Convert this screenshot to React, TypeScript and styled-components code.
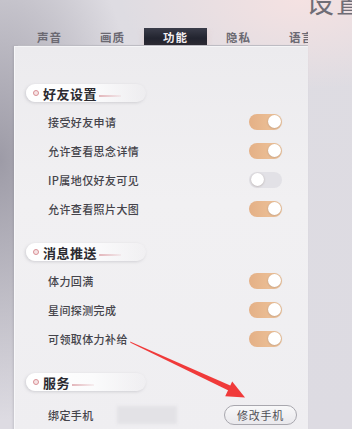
import React from "react";
import styled, { createGlobalStyle } from "styled-components";

const Global = createGlobalStyle`
  html, body { margin: 0; padding: 0; }
  body { font-family: "Noto Sans CJK SC", "Noto Sans", sans-serif; }
`;

const Screen = styled.div`
  position: relative;
  width: 352px;
  height: 429px;
  overflow: hidden;
  background:
    radial-gradient(ellipse 180px 90px at 300px 0px, rgba(246, 226, 226, 0.95), rgba(246, 226, 226, 0) 100%),
    radial-gradient(ellipse 140px 260px at 0px 160px, rgba(150, 148, 160, 0.9), rgba(160, 158, 168, 0) 100%),
    linear-gradient(180deg, #dedce2 0%, #dddbe2 100%);
  display: flex;
  flex-direction: column;
`;

const Header = styled.div`
  flex: 0 0 28px;
  height: 28px;
  display: flex;
  justify-content: flex-end;
  overflow: hidden;
`;

const Title = styled.div`
  font-size: 28px;
  line-height: 28px;
  margin-top: -13px;
  margin-right: -14px;
  color: #6f6d76;
  letter-spacing: 2px;
  font-weight: 400;
`;

const TabBar = styled.div`
  flex: 0 0 auto;
  display: flex;
  height: 17px;
  margin-left: 18px;
  width: 290px;
  overflow: hidden;
  border-bottom: 1px solid #c4c3c9;
`;

const Tab = styled.div<{ $active?: boolean }>`
  flex: 0 0 63px;
  display: flex;
  align-items: center;
  justify-content: center;
  font-size: 11.5px;
  font-weight: 700;
  letter-spacing: 1px;
  color: ${(p) => (p.$active ? "#f3eef0" : "#6b6972")};
  background: ${(p) =>
    p.$active
      ? "linear-gradient(180deg, #3b3d4a 0%, #22242f 60%, #2c2a33 100%)"
      : "transparent"};
  box-shadow: ${(p) => (p.$active ? "0 3px 6px rgba(230, 180, 170, 0.35)" : "none")};
`;

const Panel = styled.div`
  margin-left: 14px;
  width: 294px;
  flex: 1 0 auto;
  background: linear-gradient(180deg, #ecebee 0%, #f1f0f2 40%, #efeef1 100%);
  border-left: 1px solid #f7f7f9;
  border-top: 1px solid #f5f5f7;
  box-shadow: -1px 0 2px rgba(120, 118, 128, 0.25);
  padding: 37px 11px 0 11px;
  box-sizing: border-box;
  display: flex;
  flex-direction: column;
`;

const Section = styled.div<{ $first?: boolean }>`
  display: flex;
  flex-direction: column;
  flex-shrink: 0;
  margin-top: ${(p) => (p.$first ? 0 : 20)}px;
`;

const SectionHead = styled.div`
  flex-shrink: 0;
  height: 18px;
  width: 120px;
  border-radius: 9px;
  background: linear-gradient(90deg, #ffffff 0%, #fbfbfc 55%, rgba(245, 244, 246, 0) 100%);
  box-shadow: -1px 1px 3px rgba(150, 148, 158, 0.35);
  display: flex;
  align-items: center;
  padding-left: 7px;
  margin-bottom: 5px;
  box-sizing: border-box;
`;

const Dot = styled.span`
  width: 4px;
  height: 4px;
  border-radius: 50%;
  border: 1.2px solid #d98f95;
  background: #f6e3e4;
  margin-right: 4px;
`;

const HeadText = styled.span`
  font-size: 13px;
  font-weight: 700;
  color: #2c2b31;
  letter-spacing: 0.5px;
`;

const HeadLine = styled.span`
  width: 22px;
  height: 1.5px;
  margin-left: 2px;
  margin-top: 6px;
  background: linear-gradient(90deg, #e3b6bb, rgba(230, 190, 195, 0.2));
`;

const Row = styled.div<{ $tall?: boolean }>`
  flex-shrink: 0;
  height: ${(p) => (p.$tall ? 38 : 29)}px;
  display: flex;
  align-items: center;
  padding-left: 22px;
`;

const Label = styled.span<{ $fixed?: boolean }>`
  font-size: 11px;
  color: #45444b;
  font-weight: 500;
  letter-spacing: 0.4px;
  flex: ${(p) => (p.$fixed ? "0 0 auto" : "1")};
`;

const Switch = styled.div<{ $on: boolean }>`
  width: 33px;
  height: 16px;
  border-radius: 8px;
  margin-right: 15px;
  box-sizing: border-box;
  padding: 1.5px;
  display: flex;
  justify-content: ${(p) => (p.$on ? "flex-end" : "flex-start")};
  background: ${(p) =>
    p.$on ? "linear-gradient(90deg, #e4b086 0%, #efc59c 100%)" : "#e2e1e6"};
`;

const Knob = styled.div`
  width: 13px;
  height: 13px;
  border-radius: 50%;
  background: #ffffff;
  box-shadow: 0 0.5px 2px rgba(120, 100, 90, 0.45);
`;

const Blurred = styled.div`
  width: 60px;
  height: 18px;
  background: #e3e2e6;
  filter: blur(1.5px);
  margin-left: 23px;
`;

const Spacer = styled.div`
  flex: 1;
`;

const PillButton = styled.div`
  width: 73px;
  height: 20px;
  box-sizing: border-box;
  border: 1px solid #a8a7ae;
  border-radius: 10px;
  background: linear-gradient(180deg, #f8f8f9 0%, #e9e8ec 100%);
  display: flex;
  align-items: center;
  justify-content: center;
  font-size: 11px;
  color: #4e4d55;
  letter-spacing: 0.8px;
`;

const ArrowLayer = styled.svg`
  position: absolute;
  left: 0;
  top: 0;
  pointer-events: none;
`;

type Item = { label: string; on: boolean };

const sections: { title: string; items: Item[] }[] = [
  {
    title: "好友设置",
    items: [
      { label: "接受好友申请", on: true },
      { label: "允许查看思念详情", on: true },
      { label: "IP属地仅好友可见", on: false },
      { label: "允许查看照片大图", on: true },
    ],
  },
  {
    title: "消息推送",
    items: [
      { label: "体力回满", on: true },
      { label: "星间探测完成", on: true },
      { label: "可领取体力补给", on: true },
    ],
  },
];

const tabs = ["声音", "画质", "功能", "隐私", "语言"];

function Head({ title }: { title: string }) {
  return (
    <SectionHead>
      <Dot />
      <HeadText>{title}</HeadText>
      <HeadLine />
    </SectionHead>
  );
}

export default function App() {
  return (
    <>
      <Global />
      <Screen>
        <Header>
          <Title>设置</Title>
        </Header>
        <TabBar>
          {tabs.map((t) => (
            <Tab key={t} $active={t === "功能"}>
              {t}
            </Tab>
          ))}
        </TabBar>
        <Panel>
          {sections.map((s, i) => (
            <Section key={s.title} $first={i === 0}>
              <Head title={s.title} />
              {s.items.map((it) => (
                <Row key={it.label}>
                  <Label>{it.label}</Label>
                  <Switch $on={it.on}>
                    <Knob />
                  </Switch>
                </Row>
              ))}
            </Section>
          ))}
          <Section>
            <Head title="服务" />
            <Row $tall>
              <Label $fixed>绑定手机</Label>
              <Blurred />
              <Spacer />
              <PillButton>修改手机</PillButton>
            </Row>
          </Section>
        </Panel>
        <ArrowLayer width="352" height="429" viewBox="0 0 352 429">
          <polygon points="130,341.5 130.5,342.8 230.5,391.5 232.5,386.5" fill="#f03a3a" />
          <polygon points="245,397.5 232.2,381.5 225.2,396.3" fill="#f03a3a" />
        </ArrowLayer>
      </Screen>
    </>
  );
}
